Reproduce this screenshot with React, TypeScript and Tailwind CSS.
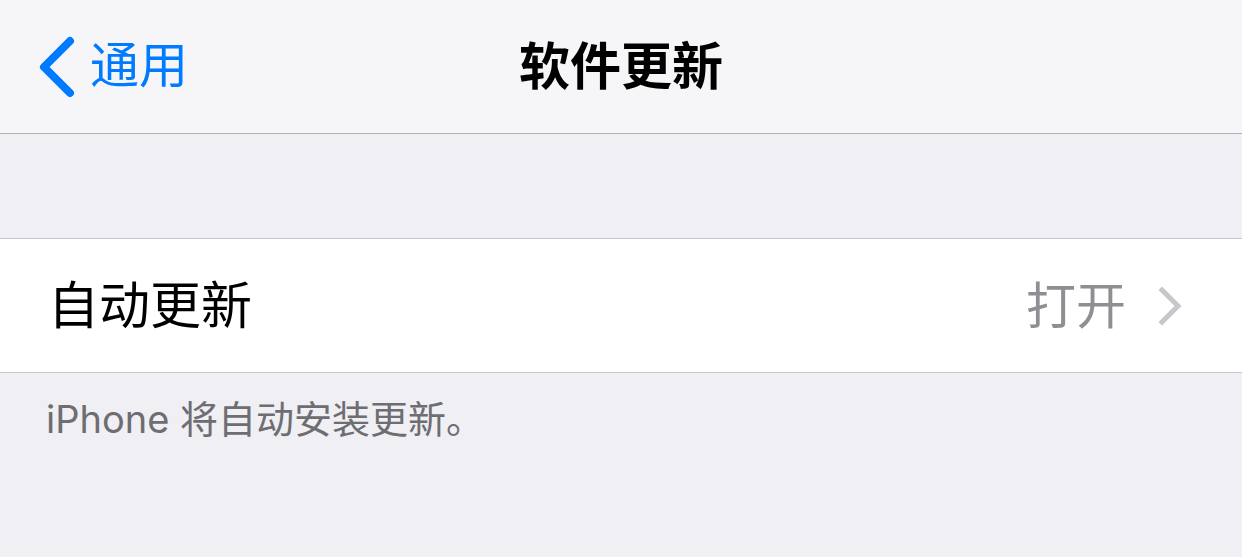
import React from 'react';

const FONT = { fontFamily: 'Inter, "Noto Sans CJK SC", sans-serif' };

const BackChevron = () => (
  <svg width="40" height="64" viewBox="0 0 40 64" fill="none">
    <path d="M34 6 L8 32 L34 58" stroke="#007aff" strokeWidth="8" strokeLinecap="round" strokeLinejoin="round" />
  </svg>
);

const RowChevron = () => (
  <svg width="26" height="40" viewBox="0 0 26 40" fill="none">
    <path d="M4 4 L20 20 L4 36" stroke="#c7c7cc" strokeWidth="5" strokeLinecap="square" strokeLinejoin="miter" />
  </svg>
);

export default function App() {
  return (
    <div className="w-[1242px] h-[557px] bg-[#efeff4] overflow-hidden" style={FONT}>
      {/* Nav bar */}
      <header className="h-[134px] bg-[#f6f6f8] border-b border-[#b2b2b2] grid grid-cols-[1fr_auto_1fr] items-center">
        <button className="flex items-center gap-[14px] pl-[36px] text-[#007aff] text-[49px] leading-none">
          <BackChevron />
          <span className="-mt-[2px]">通用</span>
        </button>
        <h1 className="text-[51px] font-bold text-black leading-none">软件更新</h1>
        <div />
      </header>

      {/* Settings group */}
      <div className="mt-[104px] bg-white border-y border-[#c8c7cc]">
        <div className="h-[133px] flex items-center justify-between pl-[48px] pr-[58px]">
          <span className="text-[51px] text-black leading-none">自动更新</span>
          <div className="flex items-center gap-[32px]">
            <span className="text-[50px] text-[#8e8e93] leading-none">打开</span>
            <RowChevron />
          </div>
        </div>
      </div>

      <p className="pl-[46px] pt-[27px] text-[38px] text-[#6d6d72] leading-none">iPhone 将自动安装更新。</p>
    </div>
  );
}
